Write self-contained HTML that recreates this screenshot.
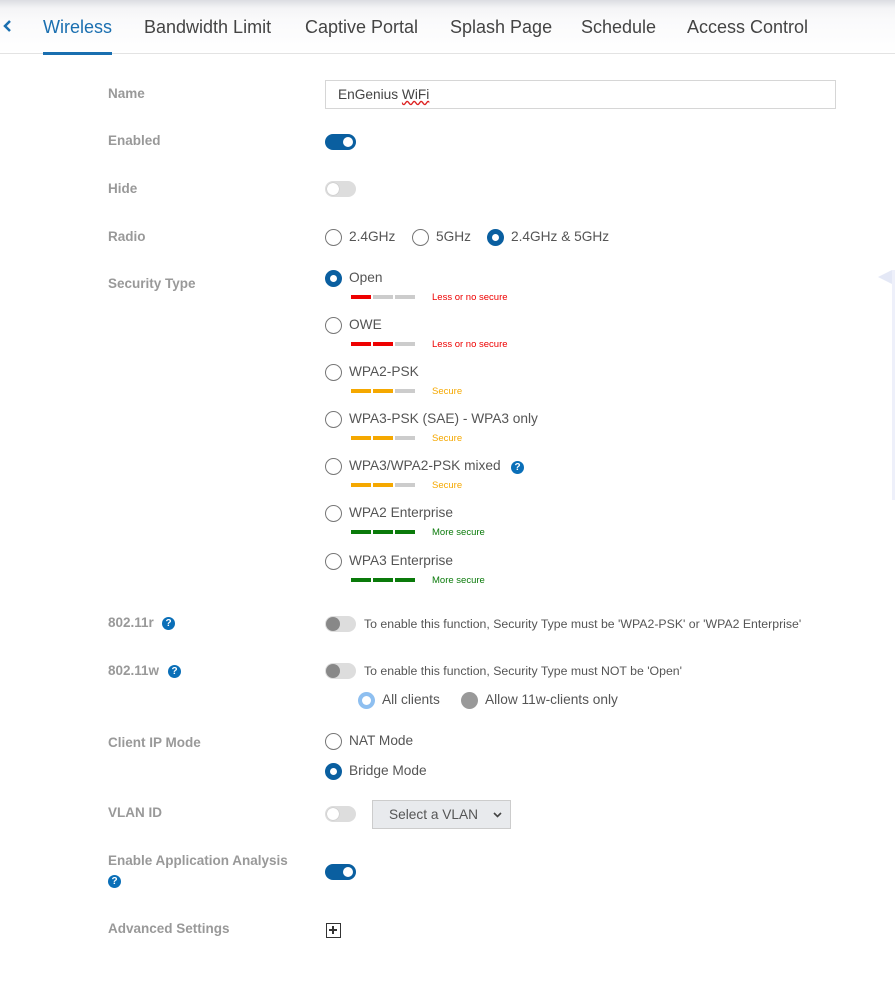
<!DOCTYPE html>
<html><head><meta charset="utf-8"><style>
*{margin:0;padding:0;box-sizing:border-box}
body{width:895px;height:1002px;background:#fff;font-family:"Liberation Sans",Arial,sans-serif;position:relative;overflow:hidden}
.a{position:absolute;white-space:nowrap}
.top{position:absolute;left:0;top:0;width:895px;height:54px;background:linear-gradient(#dcdde2 0,#f4f4f6 8px,#fafafb 20px,#fff 54px);border-bottom:1px solid #e3e3e3}
.tab{position:absolute;top:17px;font-size:18px;color:#444}
.lbl{position:absolute;left:108px;font-size:13.5px;font-weight:bold;color:#999;white-space:nowrap}
.tg{position:absolute;width:31px;height:16px;border-radius:8px}
.tg.on{background:#0a5fa0}
.tg.on::after{content:"";position:absolute;right:3px;top:3px;width:10px;height:10px;border-radius:50%;background:#fff}
.tg.off{background:#ddd}
.tg.off::after{content:"";position:absolute;left:2px;top:2px;width:12px;height:12px;border-radius:50%;background:#fff;box-shadow:0 0 1px #999}
.tg.dis{background:#ddd}
.tg.dis::after{content:"";position:absolute;left:1px;top:1px;width:14px;height:14px;border-radius:50%;background:#888}
.r{position:absolute;width:17px;height:17px;border-radius:50%;border:1px solid #777;background:#fff}
.r.sel{background:#0a5fa0;border-color:#0a5fa0}
.r.sel::after{content:"";position:absolute;left:4px;top:4px;width:7px;height:7px;border-radius:50%;background:#fff}
.t{position:absolute;font-size:13.7px;color:#555;white-space:nowrap}
.bar{position:absolute;height:4px;width:20px}
.q{position:absolute;width:13px;height:13px;border-radius:50%;background:#0a6fb8;color:#fff;font-size:10px;font-weight:bold;text-align:center;line-height:13px}
.st{position:absolute;left:432px;font-size:9.5px;white-space:nowrap}
</style></head><body>
<div class="top"></div>
<svg class="a" style="left:2px;top:19px" width="10" height="14"><path d="M8 2 L3 7 L8 12" stroke="#1a6fb0" stroke-width="2.5" fill="none"/></svg>
<div class="tab" style="left:43px;color:#1a6fb0">Wireless</div>
<div class="a" style="left:43px;top:52px;width:69px;height:3px;background:#1a6fb0"></div>
<div class="tab" style="left:144px">Bandwidth Limit</div>
<div class="tab" style="left:305px">Captive Portal</div>
<div class="tab" style="left:450px">Splash Page</div>
<div class="tab" style="left:581px">Schedule</div>
<div class="tab" style="left:687px">Access Control</div>

<div class="lbl" style="top:86px">Name</div>
<div class="a" style="left:325px;top:80px;width:511px;height:29px;border:1px solid #d6d6d6;font-size:13.7px;color:#444;padding:6px 12px">EnGenius <span style="text-decoration:underline wavy #d22">WiFi</span></div>

<div class="lbl" style="top:133px">Enabled</div>
<div class="tg on" style="left:325px;top:134px"></div>
<div class="lbl" style="top:181px">Hide</div>
<div class="tg off" style="left:325px;top:181px"></div>

<div class="lbl" style="top:229px">Radio</div>
<div class="r" style="left:325px;top:229px"></div><div class="t" style="left:349px;top:229px">2.4GHz</div>
<div class="r" style="left:412px;top:229px"></div><div class="t" style="left:436px;top:229px">5GHz</div>
<div class="r sel" style="left:487px;top:229px"></div><div class="t" style="left:511px;top:229px">2.4GHz &amp; 5GHz</div>

<div class="lbl" style="top:276px">Security Type</div>
<div class="r sel" style="left:325px;top:270px"></div><div class="t" style="left:349px;top:270px">Open</div>
<div class="bar" style="left:351px;top:295px;background:#e00"></div><div class="bar" style="left:373px;top:295px;background:#ccc"></div><div class="bar" style="left:395px;top:295px;background:#ccc"></div>
<div class="st" style="top:292px;color:#e00">Less or no secure</div>
<div class="r" style="left:325px;top:317px"></div><div class="t" style="left:349px;top:317px">OWE</div>
<div class="bar" style="left:351px;top:342px;background:#e00"></div><div class="bar" style="left:373px;top:342px;background:#e00"></div><div class="bar" style="left:395px;top:342px;background:#ccc"></div>
<div class="st" style="top:339px;color:#e00">Less or no secure</div>
<div class="r" style="left:325px;top:364px"></div><div class="t" style="left:349px;top:364px">WPA2-PSK</div>
<div class="bar" style="left:351px;top:389px;background:#f5a800"></div><div class="bar" style="left:373px;top:389px;background:#f5a800"></div><div class="bar" style="left:395px;top:389px;background:#ccc"></div>
<div class="st" style="top:386px;color:#f5a800">Secure</div>
<div class="r" style="left:325px;top:411px"></div><div class="t" style="left:349px;top:411px">WPA3-PSK (SAE) - WPA3 only</div>
<div class="bar" style="left:351px;top:436px;background:#f5a800"></div><div class="bar" style="left:373px;top:436px;background:#f5a800"></div><div class="bar" style="left:395px;top:436px;background:#ccc"></div>
<div class="st" style="top:433px;color:#f5a800">Secure</div>
<div class="r" style="left:325px;top:458px"></div><div class="t" style="left:349px;top:458px">WPA3/WPA2-PSK mixed</div><div class="q" style="left:511px;top:461px">?</div>
<div class="bar" style="left:351px;top:483px;background:#f5a800"></div><div class="bar" style="left:373px;top:483px;background:#f5a800"></div><div class="bar" style="left:395px;top:483px;background:#ccc"></div>
<div class="st" style="top:480px;color:#f5a800">Secure</div>
<div class="r" style="left:325px;top:505px"></div><div class="t" style="left:349px;top:505px">WPA2 Enterprise</div>
<div class="bar" style="left:351px;top:530px;background:#0a7a0a"></div><div class="bar" style="left:373px;top:530px;background:#0a7a0a"></div><div class="bar" style="left:395px;top:530px;background:#0a7a0a"></div>
<div class="st" style="top:527px;color:#0a7a0a">More secure</div>
<div class="r" style="left:325px;top:553px"></div><div class="t" style="left:349px;top:553px">WPA3 Enterprise</div>
<div class="bar" style="left:351px;top:578px;background:#0a7a0a"></div><div class="bar" style="left:373px;top:578px;background:#0a7a0a"></div><div class="bar" style="left:395px;top:578px;background:#0a7a0a"></div>
<div class="st" style="top:575px;color:#0a7a0a">More secure</div>

<div class="a" style="left:878px;top:270px;width:0;height:0;border-top:7px solid transparent;border-bottom:7px solid transparent;border-right:14px solid #e4e8f6"></div>
<div class="a" style="left:892px;top:270px;width:3px;height:230px;background:#eef0fa"></div>

<div class="lbl" style="top:615px">802.11r</div><div class="q" style="left:162px;top:617px">?</div>
<div class="tg dis" style="left:325px;top:616px"></div>
<div class="a" style="left:364px;top:617px;font-size:12.3px;color:#555">To enable this function, Security Type must be 'WPA2-PSK' or 'WPA2 Enterprise'</div>

<div class="lbl" style="top:663px">802.11w</div><div class="q" style="left:168px;top:665px">?</div>
<div class="tg dis" style="left:325px;top:663px"></div>
<div class="a" style="left:364px;top:664px;font-size:12.3px;color:#555">To enable this function, Security Type must NOT be 'Open'</div>
<div class="a" style="left:358px;top:692px;width:17px;height:17px;border-radius:50%;background:#8ebff0"><div style="position:absolute;left:4px;top:4px;width:9px;height:9px;border-radius:50%;background:#fff"></div></div>
<div class="t" style="left:382px;top:692px">All clients</div>
<div class="a" style="left:461px;top:692px;width:17px;height:17px;border-radius:50%;background:#999"></div>
<div class="t" style="left:485px;top:692px">Allow 11w-clients only</div>

<div class="lbl" style="top:735px">Client IP Mode</div>
<div class="r" style="left:325px;top:733px"></div><div class="t" style="left:349px;top:733px">NAT Mode</div>
<div class="r sel" style="left:325px;top:763px"></div><div class="t" style="left:349px;top:763px">Bridge Mode</div>

<div class="lbl" style="top:805px">VLAN ID</div>
<div class="tg off" style="left:325px;top:806px"></div>
<div class="a" style="left:372px;top:800px;width:139px;height:29px;background:#e8eaed;border:1px solid #ccc;font-size:13.7px;color:#555;padding:6px 0 0 16px">Select a VLAN <svg style="position:absolute;right:8px;top:11px" width="9" height="6"><path d="M1 1 L4.5 4.5 L8 1" stroke="#444" stroke-width="1.6" fill="none"/></svg></div>

<div class="lbl" style="top:853px">Enable Application Analysis</div><div class="q" style="left:108px;top:875px">?</div>
<div class="tg on" style="left:325px;top:864px"></div>

<div class="lbl" style="top:921px">Advanced Settings</div>
<div class="a" style="left:326px;top:923px;width:15px;height:15px;border:1.5px solid #333"><div style="position:absolute;left:2px;top:5px;width:8px;height:2px;background:#333"></div><div style="position:absolute;left:5px;top:2px;width:2px;height:8px;background:#333"></div></div>
</body></html>
